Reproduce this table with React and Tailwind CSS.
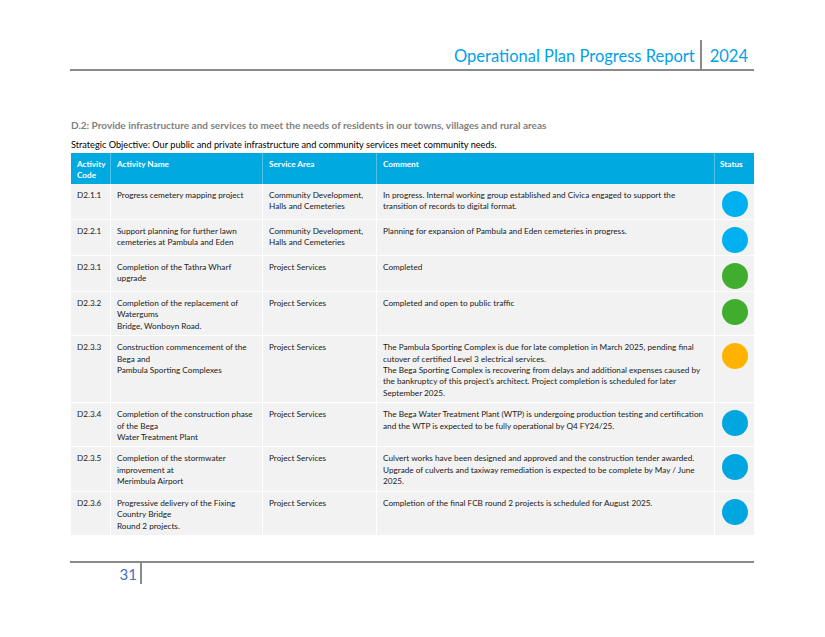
import React from 'react';

const rows = [
  {
    code: 'D2.1.1',
    name: ['Progress cemetery mapping project'],
    area: ['Community Development,', 'Halls and Cemeteries'],
    comment: [
      'In progress. Internal working group established and Civica engaged to support the',
      'transition of records to digital format.',
    ],
    status: 'bg-[#00b0f0]',
  },
  {
    code: 'D2.2.1',
    name: ['Support planning for further lawn', 'cemeteries at Pambula and Eden'],
    area: ['Community Development,', 'Halls and Cemeteries'],
    comment: ['Planning for expansion of Pambula and Eden cemeteries in progress.'],
    status: 'bg-[#00b0f0]',
  },
  {
    code: 'D2.3.1',
    name: ['Completion of the Tathra Wharf', 'upgrade'],
    area: ['Project Services'],
    comment: ['Completed'],
    status: 'bg-[#40ad2f]',
  },
  {
    code: 'D2.3.2',
    name: ['Completion of the replacement of', 'Watergums', 'Bridge, Wonboyn Road.'],
    area: ['Project Services'],
    comment: ['Completed and open to public traffic'],
    status: 'bg-[#40ad2f]',
  },
  {
    code: 'D2.3.3',
    name: ['Construction commencement of the', 'Bega and', 'Pambula Sporting Complexes'],
    area: ['Project Services'],
    comment: [
      'The Pambula Sporting Complex is due for late completion in March 2025, pending final',
      'cutover of certified Level 3 electrical services.',
      'The Bega Sporting Complex is recovering from delays and additional expenses caused by',
      "the bankruptcy of this project's architect. Project completion is scheduled for later",
      'September 2025.',
    ],
    status: 'bg-[#ffb300]',
  },
  {
    code: 'D2.3.4',
    name: ['Completion of the construction phase', 'of the Bega', 'Water Treatment Plant'],
    area: ['Project Services'],
    comment: [
      'The Bega Water Treatment Plant (WTP) is undergoing production testing and certification',
      'and the WTP is expected to be fully operational by Q4 FY24/25.',
    ],
    status: 'bg-[#00a6e0]',
  },
  {
    code: 'D2.3.5',
    name: ['Completion of the stormwater', 'improvement at', 'Merimbula Airport'],
    area: ['Project Services'],
    comment: [
      'Culvert works have been designed and approved and the construction tender awarded.',
      'Upgrade of culverts and taxiway remediation is expected to be complete by May / June',
      '2025.',
    ],
    status: 'bg-[#00a6e0]',
  },
  {
    code: 'D2.3.6',
    name: ['Progressive delivery of the Fixing', 'Country Bridge', 'Round 2 projects.'],
    area: ['Project Services'],
    comment: ['Completion of the final FCB round 2 projects is scheduled for August 2025.'],
    status: 'bg-[#00a6e0]',
  },
];

const Lines = ({ items }) => (
  <div className="px-[6px] pt-[6px] pb-[3px]">
    {items.map((t, i) => (
      <div key={i} className="whitespace-nowrap">{t}</div>
    ))}
  </div>
);

const cols = 'grid grid-cols-[40px_152px_114px_338px_39px]';

export default function App() {
  return (
    <div className="w-[825px] h-[637px] bg-white pl-[70px] pr-[71px] pt-[40px] font-['Lato',sans-serif] text-[#1a1a1a]">
      {/* Header */}
      <div className="flex justify-end h-[31px] border-b-2 border-[#8a8a8a]">
        <div className="self-end pb-[5px] pr-[5px] text-[16.5px] leading-none text-[#00a2e8]">
          Operational Plan Progress Report
        </div>
        <div className="flex items-end border-l-2 border-[#8a8a8a] pl-[8px] pr-[6px] pb-[5px] text-[16.5px] leading-none text-[#00a2e8]">
          2024
        </div>
      </div>

      <div className="mt-[48px] pl-px text-[10px] font-bold text-[#808080] leading-[12px]">
        D.2: Provide infrastructure and services to meet the needs of residents in our towns, villages and rural areas
      </div>
      <div className="mt-[8px] pl-px text-[9.2px] leading-[11px] text-black">
        Strategic Objective: Our public and private infrastructure and community services meet community needs.
      </div>

      {/* Table */}
      <div className="mt-[3px] ml-px text-[8.2px] leading-[11.4px]">
        <div className={`${cols} h-[31px] bg-[#00a9e0] text-white font-bold`}>
          <div className="px-[6px] pt-[6px] border-r border-[#4cc3ea]">Activity<br />Code</div>
          <div className="px-[6px] pt-[6px] border-r border-[#4cc3ea]">Activity Name</div>
          <div className="px-[6px] pt-[6px] border-r border-[#4cc3ea]">Service Area</div>
          <div className="px-[6px] pt-[6px] border-r border-[#4cc3ea]">Comment</div>
          <div className="px-[5px] pt-[6px]">Status</div>
        </div>
        {rows.map((r) => (
          <div key={r.code} className={`${cols} bg-[#f2f2f2] border-b border-white`}>
            <div className="border-r border-white"><Lines items={[r.code]} /></div>
            <div className="border-r border-white"><Lines items={r.name} /></div>
            <div className="border-r border-white"><Lines items={r.area} /></div>
            <div className="border-r border-white"><Lines items={r.comment} /></div>
            <div className="flex justify-center pt-[7px] pb-[2px]">
              <div className={`w-[26px] h-[26px] rounded-full ${r.status}`} />
            </div>
          </div>
        ))}
      </div>

      {/* Footer */}
      <div className="mt-[25px] border-t-2 border-[#8a8a8a] flex">
        <div className="w-[72px] h-[21px] border-r-2 border-[#8a8a8a] pr-[3px] text-right text-[15px] leading-[22px] text-[#4472c4]">
          31
        </div>
      </div>
    </div>
  );
}
